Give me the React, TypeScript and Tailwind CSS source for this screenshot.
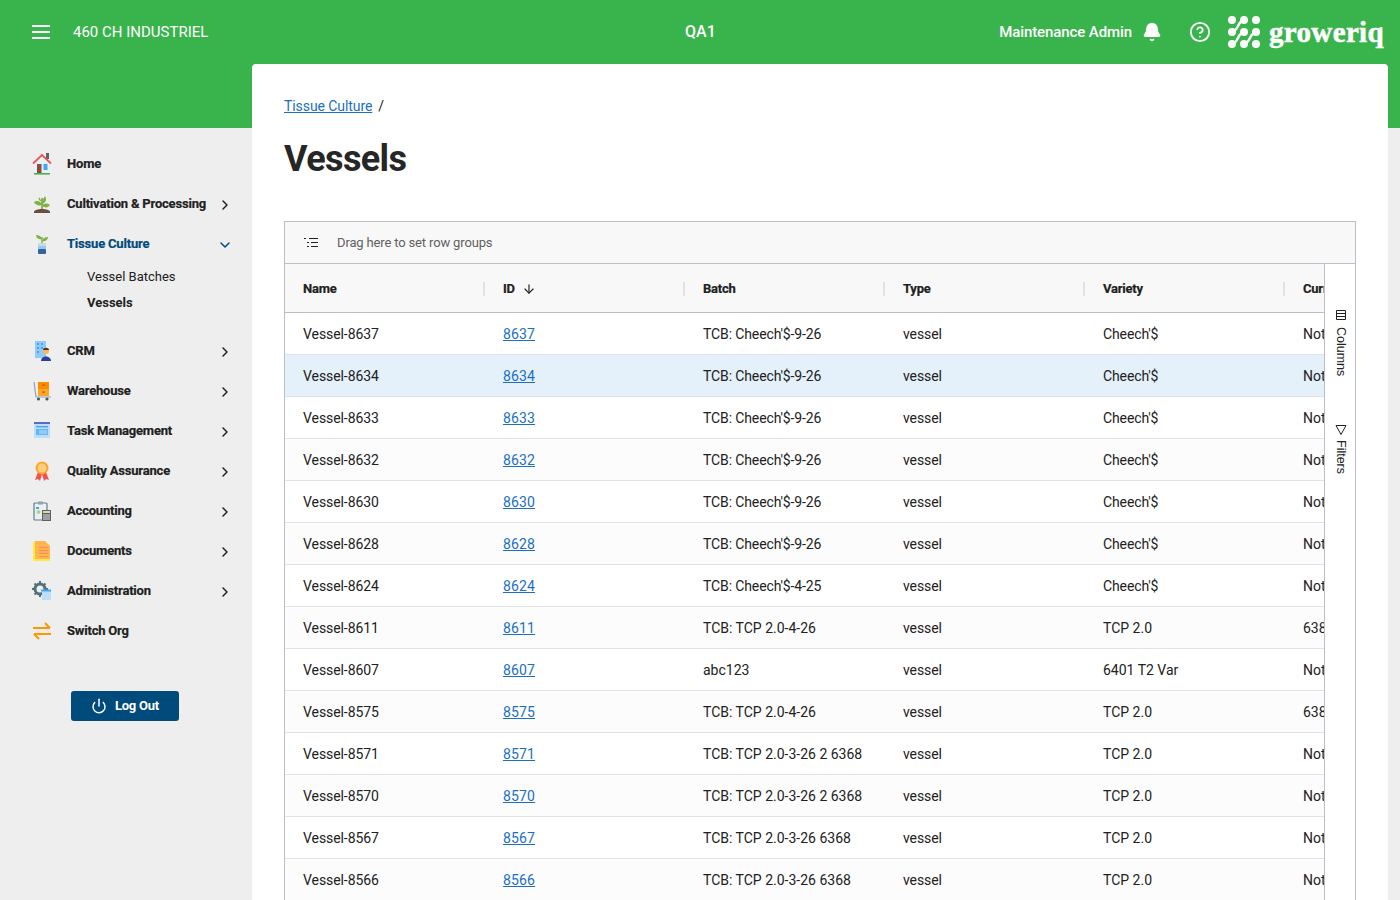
import { Bell, ChevronDown, ChevronRight, CircleHelp, Power, ArrowDown } from "lucide-react";

const menuIcons: Record<string, React.ReactNode> = {
  Home: (
    <svg viewBox="0 0 20 22" className="h-[22px] w-5">
      <path d="M3 10 10 3l7 7v10H3Z" fill="#e3f2fd" />
      <rect x="14" y="0" width="3" height="6" fill="#616161" />
      <path d="M1 10.500 10 2l9 8.500" fill="none" stroke="#ef5350" strokeWidth="1.800" />
      <rect x="5" y="11" width="4.500" height="9" fill="#8d4b3a" />
      <rect x="11.500" y="11" width="4" height="6" fill="#42a5f5" />
      <rect x="2" y="20" width="16" height="1.600" fill="#4caf50" />
    </svg>
  ),
  "Cultivation & Processing": (
    <svg viewBox="0 0 20 20" className="h-5 w-5">
      <path d="M10 15V4" stroke="#689f38" strokeWidth="1.500" />
      <path d="M10 11C9 7 5 6 2 8c1 3 5 4 8 3ZM10 10c0-4 2-6 3-8 2 3 1 7-3 8ZM10 12c2-3 5-3 8-1-2 3-5 3-8 1ZM10 8C9 6 8 5 7 3c-1 2 0 4 3 5Z" fill="#7cb342" />
      <path d="M2 18c0-4 16-4 16 0v1H2Z" fill="#6d4c41" />
    </svg>
  ),
  "Tissue Culture": (
    <svg viewBox="0 0 20 20" className="h-5 w-5">
      <path d="M10 10V3" stroke="#689f38" strokeWidth="1.200" />
      <path d="M10 5C9 2 7 1 4 1c0 3 3 5 6 4ZM10 7c1-3 3-4 6-4 0 3-3 5-6 4Z" fill="#7cb342" />
      <rect x="6" y="9" width="8" height="11" rx="1" fill="#cfd8dc" />
      <rect x="6" y="12" width="8" height="3" fill="#90caf9" />
      <rect x="6" y="15" width="8" height="5" rx="1" fill="#33629c" />
    </svg>
  ),
  CRM: (
    <svg viewBox="0 0 20 20" className="h-5 w-5">
      <rect x="3" y="0" width="11" height="17" fill="#90caf9" />
      <path d="M5 2h2v2H5ZM9 2h2v2H9ZM5 6h2v2H5ZM9 6h2v2H9ZM5 10h2v2H5Z" fill="#42a5f5" />
      <circle cx="14" cy="10" r="3" fill="#ffb74d" />
      <path d="M11 9c0-3 6-3 6 0Z" fill="#4e342e" />
      <path d="M9 20c0-6 10-6 10 0Z" fill="#283f9e" />
    </svg>
  ),
  Warehouse: (
    <svg viewBox="0 0 20 20" className="h-5 w-5">
      <rect x="6" y="1" width="11" height="7" fill="#fb8c00" />
      <rect x="6" y="8" width="11" height="7" fill="#f9a825" />
      <rect x="10" y="3.500" width="3" height="1.200" fill="#e65100" />
      <rect x="10" y="10.500" width="3" height="1.200" fill="#e65100" />
      <path d="M2 1l2 15h15" fill="none" stroke="#90a4ae" strokeWidth="1.200" />
      <circle cx="6.500" cy="18" r="1.600" fill="#455a64" />
      <circle cx="15" cy="18" r="1.600" fill="#455a64" />
    </svg>
  ),
  "Task Management": (
    <svg viewBox="0 0 20 20" className="h-5 w-5">
      <rect x="2" y="1" width="16" height="16" fill="#bbdefb" />
      <rect x="2" y="1" width="16" height="2" fill="#5c6bc0" />
      <rect x="4" y="5" width="12" height="1.400" fill="#42a5f5" />
      <rect x="4" y="8" width="12" height="6" fill="#64b5f6" />
      <rect x="7" y="9" width="8" height="4" fill="#90caf9" />
    </svg>
  ),
  "Quality Assurance": (
    <svg viewBox="0 0 20 20" className="h-5 w-5">
      <path d="M6 11 3 19l3-1 2 2 2-7ZM14 11l3 8-3-1-2 2-2-7Z" fill="#ef5350" />
      <circle cx="10" cy="7" r="6.500" fill="#f9a825" />
      <circle cx="10" cy="7" r="4.500" fill="#ffcc80" />
    </svg>
  ),
  Accounting: (
    <svg viewBox="0 0 20 20" className="h-5 w-5">
      <rect x="2" y="2" width="13" height="17" rx="1" fill="#eceff1" stroke="#607d8b" strokeWidth="1.200" />
      <rect x="6" y="0.500" width="5" height="3" fill="#90a4ae" />
      <circle cx="6.500" cy="11" r="2" fill="#aed581" />
      <rect x="4" y="6" width="3" height="2" fill="#42a5f5" />
      <rect x="10" y="9" width="9" height="11" fill="#616161" />
      <rect x="11" y="10" width="7" height="2" fill="#c5e1a5" />
      <path d="M11 13.500h7v1h-7ZM11 15.500h7v1h-7ZM11 17.500h7v1h-7Z" fill="#e0e0e0" />
    </svg>
  ),
  Documents: (
    <svg viewBox="0 0 20 20" className="h-5 w-5">
      <path d="M1 1h11l6 6v13H1Z" fill="#ffeb3b" />
      <path d="M3 0h10l5 5v13H3Z" fill="#ffb74d" />
      <path d="M7 6h9v1H7ZM7 9h9v1H7ZM7 12h9v1H7ZM7 15h9v1H7Z" fill="#ff8a65" />
    </svg>
  ),
  Administration: (
    <svg viewBox="0 0 20 20" className="h-5 w-5">
      <circle cx="8" cy="8" r="5" fill="none" stroke="#546e7a" strokeWidth="3" />
      <path d="M8 0v3M8 13v3M0 8h3M13 8h3M2.500 2.500l2 2M11.500 11.500l2 2M2.500 13.500l2-2M11.500 4.500l2-2" stroke="#546e7a" strokeWidth="2" />
      <rect x="10" y="10" width="9" height="9" fill="#bbdefb" />
      <rect x="9" y="8.500" width="10" height="2" fill="#42a5f5" />
    </svg>
  ),
  "Switch Org": (
    <svg viewBox="0 0 20 20" className="h-5 w-5" fill="none" stroke="#ff9800" strokeWidth="2">
      <path d="M1 7h17M13 2l5 5M2 13h17M2 13l5 5" />
    </svg>
  ),
};

const topMenu = ["Home", "Cultivation & Processing", "Tissue Culture"];
const bottomMenu = ["CRM", "Warehouse", "Task Management", "Quality Assurance", "Accounting", "Documents", "Administration", "Switch Org"];

const rows = [
  ["8637", "TCB: Cheech'$-9-26", "Cheech'$", "Not"],
  ["8634", "TCB: Cheech'$-9-26", "Cheech'$", "Not"],
  ["8633", "TCB: Cheech'$-9-26", "Cheech'$", "Not"],
  ["8632", "TCB: Cheech'$-9-26", "Cheech'$", "Not"],
  ["8630", "TCB: Cheech'$-9-26", "Cheech'$", "Not"],
  ["8628", "TCB: Cheech'$-9-26", "Cheech'$", "Not"],
  ["8624", "TCB: Cheech'$-4-25", "Cheech'$", "Not"],
  ["8611", "TCB: TCP 2.0-4-26", "TCP 2.0", "638"],
  ["8607", "abc123", "6401 T2 Var", "Not"],
  ["8575", "TCB: TCP 2.0-4-26", "TCP 2.0", "638"],
  ["8571", "TCB: TCP 2.0-3-26 2 6368", "TCP 2.0", "Not"],
  ["8570", "TCB: TCP 2.0-3-26 2 6368", "TCP 2.0", "Not"],
  ["8567", "TCB: TCP 2.0-3-26 6368", "TCP 2.0", "Not"],
  ["8566", "TCB: TCP 2.0-3-26 6368", "TCP 2.0", "Not"],
];

const MenuItem = ({ label, active, open }: { label: string; active?: boolean; open?: boolean }) => {
  const noArrow = label === "Home" || label === "Switch Org";
  return (
    <div className="flex h-10 items-center pr-[19px] pl-[32px]">
      <div className="flex w-[35px] shrink-0">{menuIcons[label]}</div>
      <span className={`flex-1 text-[13px] font-bold tracking-[-0.19px] [-webkit-text-stroke:0.2px] ${active ? "text-[#004b7c]" : "text-[#212121]"}`}>{label}</span>
      {!noArrow &&
        (open ? (
          <ChevronDown size={16} strokeWidth={2.2} className="mt-px text-[#004b7c]" />
        ) : (
          <ChevronRight size={16} strokeWidth={2.2} className="mt-px text-[#212121]" />
        ))}
    </div>
  );
};

const Logo = () => (
  <div className="flex items-center gap-[9px]">
    <svg viewBox="0 0 32 32" className="h-8 w-8" fill="#fff">
      <circle cx="4" cy="4" r="4" />
      <circle cx="16" cy="4" r="4" />
      <circle cx="28" cy="4" r="4" />
      <circle cx="4" cy="16" r="4" />
      <circle cx="16" cy="16" r="4" />
      <circle cx="28" cy="16" r="4" />
      <circle cx="4" cy="28" r="4" />
      <circle cx="16" cy="28" r="4" />
      <circle cx="28" cy="28" r="4" />
      <path d="M4 16C10 16 10 4 16 4M4 28C10 28 10 16 16 16M16 28C22 28 22 16 28 16" fill="none" stroke="#fff" strokeWidth="2.500" />
    </svg>
    <span className="font-['Liberation_Serif',serif] text-[29px] leading-none font-bold tracking-[0.35px] text-white [-webkit-text-stroke:0.5px_white]">groweriq</span>
  </div>
);

export default function App() {
  return (
    <div className="flex h-[900px] flex-col overflow-hidden bg-[#eeeeee] bg-[linear-gradient(#39b34c_128px,#eeeeee_128px)] font-['Roboto',sans-serif]">
      <header className="relative flex h-16 shrink-0 items-center justify-between pr-4 pl-8 text-white">
        <div className="flex items-center gap-[23px]">
          <div className="flex w-[18px] flex-col gap-1">
            <span className="h-0.5 bg-white" />
            <span className="h-0.5 bg-white" />
            <span className="h-0.5 bg-white" />
          </div>
          <span className="text-[15px]">460 CH INDUSTRIEL</span>
        </div>
        <span className="absolute left-[685px] text-[16px] font-medium">QA1</span>
        <div className="flex items-center">
          <span className="text-[15px] font-medium tracking-[-0.1px]">Maintenance Admin</span>
          <Bell size={20} fill="#fff" className="ml-[10px]" />
          <CircleHelp size={22} strokeWidth={2} className="ml-[27px]" />
          <div className="ml-[17px]">
            <Logo />
          </div>
        </div>
      </header>

      <div className="flex min-h-0 flex-1">
        <aside className="w-[252px] shrink-0 pt-[80px]">
          {topMenu.map((m) => (
            <MenuItem key={m} label={m} active={m === "Tissue Culture"} open={m === "Tissue Culture"} />
          ))}
          <div className="flex flex-col pb-[15px] pl-[87px] text-[13px] text-[#212121]">
            <span className="flex h-[26px] items-center">Vessel Batches</span>
            <span className="flex h-[26px] items-center font-bold">Vessels</span>
          </div>
          {bottomMenu.map((m) => (
            <MenuItem key={m} label={m} />
          ))}
          <button className="mt-[40px] ml-[71px] flex h-[30px] w-[108px] items-center justify-center gap-2 rounded-[3px] bg-[#004b7c] text-[13px] font-bold tracking-[-0.22px] text-white">
            <Power size={16} strokeWidth={2.2} />
            Log Out
          </button>
        </aside>

        <main className="mr-3 min-w-0 flex-1 overflow-hidden rounded-t-[4px] bg-white px-8">
          <div className="mt-[32px] flex h-[21px] items-center gap-[6px] text-[14px] text-[#212121]">
            <a className="tracking-[-0.08px] text-[#1a6fc4] underline">Tissue Culture</a>
            <span>/</span>
          </div>
          <h1 className="mt-[20px] text-[36px] leading-[44px] font-bold tracking-[-0.6px] text-[#262626]">Vessels</h1>

          <div className="mt-[40px] border border-[#babfc7] text-[14px] text-[#212121]">
            <div className="flex h-[42px] items-center border-b border-[#babfc7] bg-[#f8f8f8] pl-[18px] text-[13px] tracking-[-0.15px] text-[#616161]">
              <svg viewBox="0 0 16 16" className="mr-[18px] h-4 w-4" fill="none" stroke="#212121" strokeWidth="1">
                <path d="M1 3.500h2M6 3.500h9M4 7.500h2M8 7.500h7M4 11.500h2M8 11.500h7" />
              </svg>
              Drag here to set row groups
            </div>
            <div className="flex">
              <div className="min-w-0 flex-1 overflow-hidden">
                <div className="flex h-[49px] items-center border-b border-[#babfc7] bg-[#f8f8f8] pt-px text-[13px] font-bold tracking-[-0.22px] [-webkit-text-stroke:0.2px]">
                  {["Name", "ID", "Batch", "Type", "Variety", "Current"].map((h, i) => (
                    <div key={h} className="relative flex w-[200px] shrink-0 items-center gap-[7px] pl-[18px]">
                      {h}
                      {h === "ID" && <ArrowDown size={14} strokeWidth={2} />}
                      {i < 5 && <span className="absolute right-0 h-[14px] w-0.5 bg-[#dde2eb]" />}
                    </div>
                  ))}
                </div>
                {rows.map((r, i) => {
                  const cheech = r[2].startsWith("Cheech") ? "tracking-[-0.12px]" : "";
                  return (
                    <div
                      key={r[0]}
                      className={`flex h-[42px] items-center border-b border-[#dde2eb] pt-px ${i === 1 ? "bg-[#e4f0fa]" : i % 2 === 1 ? "bg-[#fcfcfc]" : "bg-white"}`}
                    >
                      <div className="w-[200px] shrink-0 pl-[18px] tracking-[-0.08px]">Vessel-{r[0]}</div>
                      <div className="w-[200px] shrink-0 pl-[18px]">
                        <a className="tracking-[0.15px] text-[#1a6fc4] underline">{r[0]}</a>
                      </div>
                      <div className={`w-[200px] shrink-0 pl-[18px] ${cheech}`}>{r[1]}</div>
                      <div className="w-[200px] shrink-0 pl-[18px] tracking-[-0.08px]">vessel</div>
                      <div className={`w-[200px] shrink-0 pl-[18px] ${cheech}`}>{r[2]}</div>
                      <div className="w-[200px] shrink-0 pl-[18px]">{r[3]}</div>
                    </div>
                  );
                })}
              </div>
              <div className="flex w-[31px] shrink-0 flex-col items-center border-l border-[#babfc7] bg-white pt-[45px] pl-0.5 font-['Liberation_Sans',sans-serif] text-[12.5px]">
                <div className="flex items-center gap-[6px] [writing-mode:vertical-rl]">
                  <svg viewBox="0 0 12 12" className="h-3 w-3" fill="none" stroke="#212121">
                    <path d="M1.500 1.500h9v9h-9ZM1.500 4.500h9M1.500 7.500h9" />
                  </svg>
                  Columns
                </div>
                <div className="mt-[48px] flex items-center gap-1 [writing-mode:vertical-rl]">
                  <svg viewBox="0 0 12 12" className="h-3 w-3" fill="none" stroke="#212121">
                    <path d="M1 1.500h10L6 10.500Z" />
                  </svg>
                  Filters
                </div>
              </div>
            </div>
          </div>
        </main>
      </div>
    </div>
  );
}
